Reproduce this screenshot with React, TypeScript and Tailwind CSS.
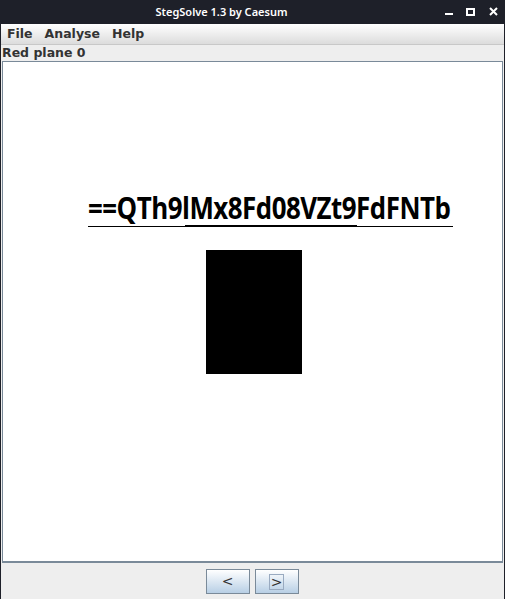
import React from "react";

export default function App() {
  const dialog = { fontFamily: '"DejaVu Sans", "Liberation Sans", sans-serif' };
  return (
    <div className="w-[505px] h-[599px] flex flex-col bg-[#1e2029] overflow-hidden">
      {/* title bar */}
      <div className="h-[24px] shrink-0 flex items-center relative">
        <div
          className="flex-1 text-center text-white text-[11px] font-semibold pr-[62px] whitespace-nowrap"
          style={{ fontFamily: '"Noto Sans", "Open Sans", sans-serif' }}
        >
          StegSolve 1.3 by Caesum
        </div>
        <svg className="absolute left-0 top-0" width="505" height="24" viewBox="0 0 505 24">
          <rect x="445" y="13" width="8" height="2" fill="#ffffff" />
          <rect x="467" y="9" width="7" height="6" fill="none" stroke="#ffffff" strokeWidth="2" />
          <path d="M490 8 L497 15 M497 8 L490 15" stroke="#ffffff" strokeWidth="2" />
        </svg>
      </div>
      {/* window body */}
      <div className="flex-1 flex flex-col bg-[#eeeeee] ml-[1px] mr-[1px]">
        {/* menu bar */}
        <div
          className="h-[21px] shrink-0 flex items-center gap-[12px] pl-[6px] bg-gradient-to-b from-[#ffffff] to-[#dcdcdc] border-b border-[#c8c8c8] text-[12.5px] font-bold text-[#333333]"
          style={dialog}
        >
          <span>File</span>
          <span>Analyse</span>
          <span>Help</span>
        </div>
        {/* label */}
        <div
          className="h-[16px] shrink-0 pl-[1px] text-[12.5px] font-bold leading-[16px] text-[#333333]"
          style={dialog}
        >
          Red plane 0
        </div>
        {/* image panel */}
        <div className="h-[502px] shrink-0 mx-[1px] border border-[#7a8a99] border-b-2 bg-white relative overflow-hidden">
          <div
            className="absolute left-[85px] top-[130px] text-[31px] font-bold leading-none text-black tracking-[-0.6px] whitespace-nowrap origin-left scale-x-[0.835]"
            style={{ fontFamily: '"Open Sans", "Noto Sans", sans-serif' }}
          >
            ==QTh9lMx8Fd08VZt9FdFNTb
          </div>
          <div className="absolute left-[85px] top-[164px] w-[365px] h-[1px] bg-black" />
          <div className="absolute left-[182px] top-[163px] w-[172px] h-[2px] bg-black" />
          <div className="absolute left-[203px] top-[188px] w-[96px] h-[124px] bg-black" />
        </div>
        {/* buttons */}
        <div className="flex-1 flex justify-center pt-[6px] gap-[5px] pr-[1px]">
          <button
            className="w-[44px] h-[25px] border border-[#7a8a99] bg-gradient-to-b from-[#ffffff] to-[#b8cfe5] flex items-center justify-center text-[14px] text-[#333333]"
            style={dialog}
          >
            &lt;
          </button>
          <button
            className="w-[44px] h-[25px] border border-[#7a8a99] bg-gradient-to-b from-[#ffffff] to-[#b8cfe5] flex items-center justify-center text-[14px] text-[#333333]"
            style={dialog}
          >
            <span className="border border-[#99aac0] px-[1px] leading-[14px]">&gt;</span>
          </button>
        </div>
      </div>
    </div>
  );
}
